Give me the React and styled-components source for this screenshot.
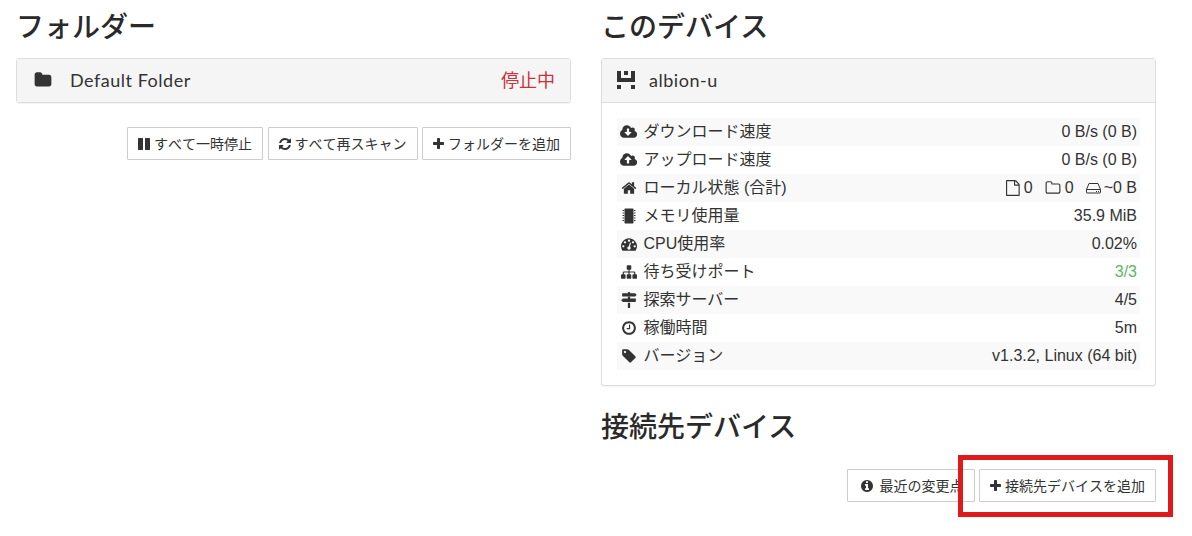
import React from "react";
import styled, { createGlobalStyle } from "styled-components";

const CJK = `"Noto Sans CJK JP"`;

const GlobalStyle = createGlobalStyle`
  html, body {
    margin: 0;
    padding: 0;
    background: #fff;
    color: #333;
    font-family: "Liberation Sans", ${CJK}, sans-serif;
    font-size: 16px;
  }
`;

const Page = styled.div`
  position: relative;
  width: 1192px;
  height: 536px;
  overflow: hidden;
  box-sizing: border-box;
  padding: 0 36px 0 16px;
  display: grid;
  grid-template-columns: 555px 555px;
  column-gap: 30px;
  align-items: start;
`;

const Column = styled.div`
  display: flex;
  flex-direction: column;
`;

const Title = styled.h1`
  margin: ${(p) => (p.$second ? "21px 0 0" : "7px 0 0")};
  height: 38px;
  font-size: 28px;
  line-height: 38px;
  font-weight: 500;
  color: #2a2a2a;
  font-family: "Lato", ${CJK}, sans-serif;
`;

const Panel = styled.div`
  margin-top: 13px;
  border: 1px solid #ddd;
  border-radius: 3px;
  box-shadow: 0 1px 1px rgba(0, 0, 0, 0.05);
  background: #fff;
`;

const PanelHeading = styled.div`
  box-sizing: border-box;
  height: ${(p) => (p.$open ? 44 : 43)}px;
  display: flex;
  align-items: center;
  padding: 0 15px 2px ${(p) => (p.$open ? 15 : 17)}px;
  background: #f5f5f5;
  color: #333;
  font-family: "Lato", ${CJK}, sans-serif;
  font-size: 18px;
  line-height: 24px;
  letter-spacing: 0.52px;
  border-bottom: ${(p) => (p.$open ? "1px solid #ddd" : "none")};
`;

const HeadingIcon = styled.span`
  display: flex;
  width: ${(p) => p.$w}px;
  flex: none;
  color: #333;
`;

const HeadingName = styled.span`
  flex: 1;
`;

const StateLabel = styled.span`
  color: #c8323a;
  font-size: 18px;
  letter-spacing: 0;
`;

const PanelBody = styled.div`
  padding: 15px;
`;

const Row = styled.div`
  height: 28px;
  display: flex;
  align-items: center;
  justify-content: space-between;
  padding: 0 3px 0 1px;
  background: ${(p) => (p.$odd ? "#f9f9f9" : "#fff")};
  color: #333;
  font-size: 16px;
  line-height: 20px;
`;

const RowLabel = styled.span`
  display: flex;
  align-items: center;
`;

const RowIcon = styled.span`
  width: 21px;
  flex: none;
  display: flex;
  justify-content: center;
  margin-right: 4.5px;
  font-size: 16px;
`;

const RowValue = styled.span`
  display: flex;
  align-items: center;
  color: ${(p) => (p.$ok ? "#5cb85c" : "#333")};
`;

const StatItem = styled.span`
  display: flex;
  align-items: center;
  gap: 4px;
  margin-left: 12px;
  &:last-child {
    gap: 3px;
  }
`;

const Toolbar = styled.div`
  display: flex;
  justify-content: flex-end;
  gap: 4.5px;
  margin-top: 24px;
`;

const Button = styled.button`
  height: 33px;
  padding: 0 10px;
  display: flex;
  align-items: center;
  gap: 4px;
  background: #fff;
  border: 1px solid #ccc;
  border-radius: 1px;
  color: #333;
  font-family: "Liberation Sans", ${CJK}, sans-serif;
  font-size: 14px;
  line-height: 20px;
  font-kerning: none;
  white-space: nowrap;
`;

const FixedWidth = styled.span`
  width: 18px;
  display: flex;
  justify-content: center;
`;

const RedMark = styled.div`
  position: absolute;
  left: 958px;
  top: 455px;
  width: 215px;
  height: 62px;
  box-sizing: border-box;
  border: 5px solid #e01a1a;
`;

// Font Awesome 4 outlines, which the icon package no longer has
const paths = {
  cloudDown: [0, 1920, "M1280 928q0-14-9-23t-23-9h-224v-352q0-13-9.5-22.5t-22.5-9.5h-192q-13 0-22.5 9.5t-9.5 22.5v352h-224q-13 0-22.5 9.5t-9.5 22.5q0 14 9 23l352 352q9 9 23 9t23-9l351-351q10-12 10-24zm640 224q0 159-112.5 271.5t-271.5 112.5h-1088q-185 0-316.5-131.5t-131.5-316.5q0-130 70-240t188-165q-2-30-2-43 0-212 150-362t362-150q156 0 285.5 87t188.5 231q71-62 166-62 106 0 181 75t75 181q0 76-41 138 130 31 213.5 135.5t83.5 238.5z"],
  cloudUp: [0, 1920, "M1280 864q0-14-9-23l-352-352q-9-9-23-9t-23 9l-351 351q-10 12-10 24 0 14 9 23t23 9h224v352q0 13 9.5 22.5t22.5 9.5h192q13 0 22.5-9.5t9.5-22.5v-352h224q13 0 22.5-9.5t9.5-22.5zm640 288q0 159-112.5 271.5t-271.5 112.5h-1088q-185 0-316.5-131.5t-131.5-316.5q0-130 70-240t188-165q-2-30-2-43 0-212 150-362t362-150q156 0 285.5 87t188.5 231q71-62 166-62 106 0 181 75t75 181q0 76-41 138 130 31 213.5 135.5t83.5 238.5z"],
  home: [0, 1792, "M1472 992v480q0 26-19 45t-45 19h-384v-384h-256v384h-384q-26 0-45-19t-19-45v-480q0-1 .5-3t.5-3l575-474 575 474q1 2 1 6zm223-69l-62 74q-8 9-21 11h-3q-13 0-21-7l-692-577-692 577q-12 8-24 7-13-2-21-11l-62-74q-8-10-7-23.5t11-21.5l719-599q32-26 76-26t76 26l244 204v-195q0-14 9-23t23-9h192q14 0 23 9t9 23v408l219 182q10 8 11 21.5t-7 23.5z"],
  gauge: [0, 1792, "M384 1152q0-53-37.5-90.5t-90.5-37.5-90.5 37.5-37.5 90.5 37.5 90.5 90.5 37.5 90.5-37.5 37.5-90.5zm192-448q0-53-37.5-90.5t-90.5-37.5-90.5 37.5-37.5 90.5 37.5 90.5 90.5 37.5 90.5-37.5 37.5-90.5zm428 481l101-382q6-26-7.5-48.5t-38.5-29.5-48 6.5-30 39.5l-101 382q-60 5-107 43.5t-63 98.5q-20 77 20 146t117 89 146-20 89-117q16-60-6-117t-72-91zm660-33q0-53-37.5-90.5t-90.5-37.5-90.5 37.5-37.5 90.5 37.5 90.5 90.5 37.5 90.5-37.5 37.5-90.5zm-640-640q0-53-37.5-90.5t-90.5-37.5-90.5 37.5-37.5 90.5 37.5 90.5 90.5 37.5 90.5-37.5 37.5-90.5zm448 192q0-53-37.5-90.5t-90.5-37.5-90.5 37.5-37.5 90.5 37.5 90.5 90.5 37.5 90.5-37.5 37.5-90.5zm320 448q0 261-141 483-19 29-54 29h-1402q-35 0-54-29-141-221-141-483 0-182 71-348t191-286 286-191 348-71 348 71 286 191 191 286 71 348z"],
  sitemap: [0, 1792, "M1792 1248v320q0 40-28 68t-68 28h-320q-40 0-68-28t-28-68v-320q0-40 28-68t68-28h96v-192h-512v192h96q40 0 68 28t28 68v320q0 40-28 68t-68 28h-320q-40 0-68-28t-28-68v-320q0-40 28-68t68-28h96v-192h-512v192h96q40 0 68 28t28 68v320q0 40-28 68t-68 28h-320q-40 0-68-28t-28-68v-320q0-40 28-68t68-28h96v-192q0-52 38-90t90-38h512v-192h-96q-40 0-68-28t-28-68v-320q0-40 28-68t68-28h320q40 0 68 28t28 68v320q0 40-28 68t-68 28h-96v192h512q52 0 90 38t38 90v192h96q40 0 68 28t28 68z"],
  signs: [0, 1792, "M1745 297q10 10 10 23t-10 23l-141 141q-28 28-68 28h-1344q-26 0-45-19t-19-45v-256q0-26 19-45t45-19h576v-64q0-26 19-45t45-19h128q26 0 45 19t19 45v64h512q40 0 68 28zm-977 907h256v512q0 26-19 45t-45 19h-128q-26 0-45-19t-19-45v-512zm832-480q26 0 45 19t19 45v256q0 26-19 45t-45 19h-1344q-40 0-68-28l-141-141q-10-10-10-23t10-23l141-141q28-28 68-28h512v-192h256v192h576z"],
  clock: [0, 1792, "M1024 544v448q0 14-9 23t-23 9h-320q-14 0-23-9t-9-23v-64q0-14 9-23t23-9h224v-352q0-14 9-23t23-9h64q14 0 23 9t9 23zm416 352q0-148-73-273t-198-198-273-73-273 73-198 198-73 273 73 273 198 198 273 73 273-73 198-198 73-273zm224 0q0 209-103 385.5t-279.5 279.5-385.5 103-385.5-103-279.5-279.5-103-385.5 103-385.5 279.5-279.5 385.5-103 385.5 103 279.5 279.5 103 385.5z"],
  tag: [0, 1664, "M576 448q0-53-37.5-90.5t-90.5-37.5-90.5 37.5-37.5 90.5 37.5 90.5 90.5 37.5 90.5-37.5 37.5-90.5zm1067 576q0 53-37 90l-491 492q-39 37-91 37-53 0-90-37l-715-716q-38-37-64.5-101t-26.5-117v-416q0-52 38-90t90-38h416q53 0 117 26.5t102 64.5l715 714q37 39 37 91z"],
  folder: [0, 1792, "M1728 608v704q0 92-66 158t-158 66h-1216q-92 0-158-66t-66-158v-960q0-92 66-158t158-66h320q92 0 158 66t66 158v32h672q92 0 158 66t66 158z"],
  folderO: [0, 1792, "M1600 1312v-704q0-40-28-68t-68-28h-704q-40 0-68-28t-28-68v-64q0-40-28-68t-68-28h-320q-40 0-68 28t-28 68v960q0 40 28 68t68 28h1216q40 0 68-28t28-68zm128-704v704q0 92-66 158t-158 66h-1216q-92 0-158-66t-66-158v-960q0-92 66-158t158-66h320q92 0 158 66t66 158v32h672q92 0 158 66t66 158z"],
  file: [128, 1536, "M1596 380q28 28 48 76t20 88v1152q0 40-28 68t-68 28h-1344q-40 0-68-28t-28-68v-1600q0-40 28-68t68-28h896q40 0 88 20t76 48zm-444-244v376h376q-10-29-22-41l-313-313q-12-12-41-22zm384 1528v-1024h-416q-40 0-68-28t-28-68v-416h-768v1536h1280z"],
  pause: [128, 1536, "M1664 192v1408q0 26-19 45t-45 19h-512q-26 0-45-19t-19-45v-1408q0-26 19-45t45-19h512q26 0 45 19t19 45zm-896 0v1408q0 26-19 45t-45 19h-512q-26 0-45-19t-19-45v-1408q0-26 19-45t45-19h512q26 0 45 19t19 45z"],
  refresh: [128, 1536, "M1639 1056q0 5-1 7-64 268-268 434.5t-478 166.5q-146 0-282.5-55t-243.5-157l-129 129q-19 19-45 19t-45-19-19-45v-448q0-26 19-45t45-19h448q26 0 45 19t19 45-19 45l-137 137q71 66 161 102t187 36q134 0 250-65t186-179q11-17 53-117 8-23 30-23h192q13 0 22.5 9.5t9.5 22.5zm25-800v448q0 26-19 45t-45 19h-448q-26 0-45-19t-19-45 19-45l138-138q-148-137-349-137-134 0-250 65t-186 179q-11 17-53 117-8 23-30 23h-199q-13 0-22.5-9.5t-9.5-22.5v-7q65-268 270-434.5t480-166.5q146 0 284 55.5t245 156.5l130-129q19-19 45-19t45 19 19 45z"],
  plus: [192, 1408, "M1600 736v192q0 40-28 68t-68 28h-416v416q0 40-28 68t-68 28h-192q-40 0-68-28t-28-68v-416h-416q-40 0-68-28t-28-68v-192q0-40 28-68t68-28h416v-416q0-40 28-68t68-28h192q40 0 68 28t28 68v416h416q40 0 68 28t28 68z"],
  info: [128, 1536, "M1152 1376v-160q0-14-9-23t-23-9h-96v-512q0-14-9-23t-23-9h-320q-14 0-23 9t-9 23v160q0 14 9 23t23 9h96v320h-96q-14 0-23 9t-9 23v160q0 14 9 23t23 9h448q14 0 23-9t9-23zm-128-896v-160q0-14-9-23t-23-9h-192q-14 0-23 9t-9 23v160q0 14 9 23t23 9h192q14 0 23-9t9-23zm640 416q0 209-103 385.5t-279.5 279.5-385.5 103-385.5-103-279.5-279.5-103-385.5 103-385.5 279.5-279.5 385.5-103 385.5 103 279.5 279.5 103 385.5z"],
};

const Glyph = ({ name, size = 14 }) => {
  const [x, w, d] = paths[name];
  return (
    <svg width={(size * w) / 1792} height={size} viewBox={`${x} 0 ${w} 1792`} fill="currentColor">
      <path d={d} />
    </svg>
  );
};

const ChipIcon = () => (
  <svg width="14" height="16" viewBox="0 0 14 16" fill="currentColor">
    <rect x="2.5" y="0.5" width="9" height="15" rx="0.8" />
    <path d="M0.5 2h1.5v1H0.5zM0.5 4.5h1.5v1H0.5zM0.5 7h1.5v1H0.5zM0.5 9.5h1.5v1H0.5zM0.5 12h1.5v1H0.5z" />
    <path d="M12 2h1.5v1H12zM12 4.5h1.5v1H12zM12 7h1.5v1H12zM12 9.5h1.5v1H12zM12 12h1.5v1H12z" />
  </svg>
);

const DriveIcon = () => (
  <svg width="15" height="16" viewBox="0 0 15 16" fill="none" stroke="currentColor" strokeWidth="1">
    <path d="M.5 9.5 3 3.5h9l2.5 6v3a.5.5 0 0 1-.5.5H1a.5.5 0 0 1-.5-.5z" />
    <path d="M.5 9.5h14" />
    <path d="M10 11.5h1M12 11.5h1" />
  </svg>
);

const Identicon = () => (
  <svg width="18" height="18" viewBox="0 0 5 5" fill="#333" shapeRendering="crispEdges">
    <rect x="0" y="0" width="1" height="3" />
    <rect x="2" y="0" width="1" height="1" />
    <rect x="4" y="0" width="1" height="3" />
    <rect x="1" y="2" width="3" height="1" />
    <rect x="0" y="4" width="1" height="1" />
    <rect x="4" y="4" width="1" height="1" />
  </svg>
);

const rows = [
  { icon: <Glyph name="cloudDown" size={16} />, label: "ダウンロード速度", value: "0 B/s (0 B)" },
  { icon: <Glyph name="cloudUp" size={16} />, label: "アップロード速度", value: "0 B/s (0 B)" },
  {
    icon: <Glyph name="home" size={16} />,
    label: "ローカル状態 (合計)",
    value: (
      <>
        <StatItem>
          <Glyph name="file" size={16} />0
        </StatItem>
        <StatItem>
          <Glyph name="folderO" size={16} />0
        </StatItem>
        <StatItem>
          <DriveIcon />~0 B
        </StatItem>
      </>
    ),
  },
  { icon: <ChipIcon />, label: "メモリ使用量", value: "35.9 MiB" },
  { icon: <Glyph name="gauge" size={16} />, label: "CPU使用率", value: "0.02%" },
  { icon: <Glyph name="sitemap" size={16} />, label: "待ち受けポート", value: "3/3", ok: true },
  { icon: <Glyph name="signs" size={16} />, label: "探索サーバー", value: "4/5" },
  { icon: <Glyph name="clock" size={16} />, label: "稼働時間", value: "5m" },
  { icon: <Glyph name="tag" size={16} />, label: "バージョン", value: "v1.3.2, Linux (64 bit)" },
];

export default function App() {
  return (
    <Page>
      <GlobalStyle />
      <Column>
        <Title>フォルダー</Title>
        <Panel>
          <PanelHeading>
            <HeadingIcon $w={36}>
              <Glyph name="folder" size={18} />
            </HeadingIcon>
            <HeadingName>Default Folder</HeadingName>
            <StateLabel>停止中</StateLabel>
          </PanelHeading>
        </Panel>
        <Toolbar>
          <Button>
            <Glyph name="pause" />
            すべて一時停止
          </Button>
          <Button>
            <Glyph name="refresh" />
            すべて再スキャン
          </Button>
          <Button>
            <Glyph name="plus" />
            フォルダーを追加
          </Button>
        </Toolbar>
      </Column>
      <Column>
        <Title>このデバイス</Title>
        <Panel>
          <PanelHeading $open>
            <HeadingIcon $w={32}>
              <Identicon />
            </HeadingIcon>
            <HeadingName>albion-u</HeadingName>
          </PanelHeading>
          <PanelBody>
            {rows.map((r, i) => (
              <Row key={r.label} $odd={i % 2 === 0}>
                <RowLabel>
                  <RowIcon>{r.icon}</RowIcon>
                  {r.label}
                </RowLabel>
                <RowValue $ok={r.ok}>{r.value}</RowValue>
              </Row>
            ))}
          </PanelBody>
        </Panel>
        <Title $second>接続先デバイス</Title>
        <Toolbar>
          <Button>
            <FixedWidth>
              <Glyph name="info" />
            </FixedWidth>
            最近の変更点
          </Button>
          <Button>
            <Glyph name="plus" />
            接続先デバイスを追加
          </Button>
        </Toolbar>
      </Column>
      <RedMark />
    </Page>
  );
}
